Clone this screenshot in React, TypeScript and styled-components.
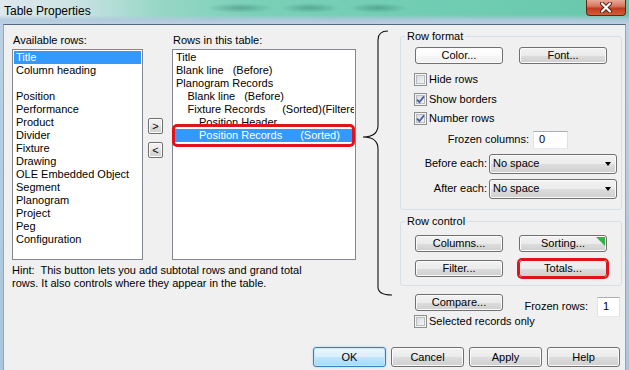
import React from 'react'
import styled, { createGlobalStyle, css } from 'styled-components'

const GlobalStyle = createGlobalStyle`
  html, body {
    margin: 0;
    padding: 0;
    background: #fff;
  }
  body {
    font-family: 'Liberation Sans', Arial, sans-serif;
    font-size: 11px;
    line-height: 13px;
    color: #000;
  }
  * {
    box-sizing: border-box;
  }
`

const Window = styled.div`
  width: 629px;
  height: 370px;
  display: flex;
  flex-direction: column;
  overflow: hidden;
  background: linear-gradient(to bottom, #bcd1e3, #a9c6dc);
`

const TitleBar = styled.div`
  height: 24px;
  flex: none;
  display: flex;
  align-items: flex-start;
  justify-content: space-between;
  padding: 0 3px 0 4px;
  background:
    linear-gradient(to bottom, rgba(190, 208, 226, 0) 62%, rgba(178, 201, 222, 0.9) 82%, #bcd0e2 100%),
    radial-gradient(ellipse 34px 5px at 240px 8px, rgba(25, 95, 80, 0.35), transparent),
    radial-gradient(ellipse 30px 5px at 310px 8px, rgba(25, 95, 80, 0.35), transparent),
    radial-gradient(ellipse 30px 5px at 378px 8px, rgba(25, 95, 80, 0.35), transparent),
    radial-gradient(ellipse 20px 4px at 210px 21px, rgba(60, 80, 100, 0.25), transparent),
    radial-gradient(ellipse 20px 4px at 330px 21px, rgba(60, 80, 100, 0.2), transparent),
    linear-gradient(to right, #dfe8ef 0px, #cde3e4 70px, #96d7c5 160px, #79d0b7 260px, #6fccb1 480px, #68c7ab 629px);
`

const Title = styled.div`
  padding-top: 4px;
  font-size: 12px;
  line-height: 15px;
`

const CloseButton = styled.div`
  width: 40px;
  height: 16px;
  display: flex;
  align-items: center;
  justify-content: center;
  border: 1px solid #6a2114;
  border-top: none;
  border-radius: 0 0 4px 4px;
  background: linear-gradient(to bottom, #eaa898 0%, #d8765e 42%, #c13a1d 55%, #d2603a 100%);
`

const Client = styled.div`
  flex: 1;
  display: flex;
  flex-direction: column;
  margin: 0 3px;
  background: #f0f0f0;
  border-top: 1px solid #56697c;
  border-left: 1px solid #8ea8bf;
  border-right: 1px solid #8ea8bf;
`

const Main = styled.div`
  display: flex;
  align-items: flex-start;
  padding: 3px 3px 0 8px;
`

const LeftArea = styled.div`
  width: 344px;
  flex: none;
  padding-top: 5.5px;
  display: grid;
  grid-template-columns: 131px 29px 184px;
`

const FieldLabel = styled.div`
  margin: 0 0 2.5px 1px;
  white-space: nowrap;
`

const ListBox = styled.div`
  height: 211px;
  border: 1px solid #828790;
  background: #fff;
  padding: 1px;
`

const ListItem = styled.div<{ $selected?: boolean; $level?: number }>`
  height: 13px;
  line-height: 13px;
  padding-left: ${p => 2 + (p.$level ?? 0) * 11.5}px;
  white-space: nowrap;
  overflow: hidden;
  ${p =>
    p.$selected &&
    css`
      background: #3399ff;
      color: #fff;
    `}
`

const Note = styled.span<{ $gap: number }>`
  margin-left: ${p => p.$gap}px;
`

const Marked = styled.div`
  position: relative;

  &::before {
    content: '';
    position: absolute;
    top: -5px;
    bottom: -5px;
    left: -2px;
    right: -1px;
    border: 3px solid #e0121c;
    border-radius: 5px;
  }
`

const MoveButtons = styled.div`
  display: flex;
  flex-direction: column;
  gap: 8px;
  padding: 69px 0 0 5px;
`

const MoveButton = styled.button`
  width: 15px;
  height: 16px;
  padding: 0;
  font-family: inherit;
  font-size: 11px;
  line-height: 12px;
  color: #000;
  border: 1px solid #707070;
  border-radius: 2px;
  background: linear-gradient(to bottom, #f2f2f2 0%, #ebebeb 50%, #dddddd 51%, #cfcfcf 100%);
  box-shadow: inset 0 0 0 1px #fafafa;
`

const Hint = styled.div`
  grid-column: 1 / -1;
  margin-top: 3.5px;
`

const Brace = styled.svg`
  flex: none;
  width: 36px;
  height: 270px;
  margin-left: 4px;
`

const RightPanel = styled.div`
  width: 222px;
  flex: none;
  margin: 1.5px 0 0 4px;
  display: flex;
  flex-direction: column;
`

const Group = styled.fieldset<{ $gapTop?: number }>`
  margin: ${p => p.$gapTop ?? 0}px 0 0;
  padding: 0;
  min-width: 0;
  border: 1px solid #d5dfe5;
  border-radius: 3px;
`

const Legend = styled.legend`
  margin-left: 4px;
  padding: 0 2px;
  line-height: 13px;
`

const GroupBody = styled.div<{ $pad: string }>`
  padding: ${p => p.$pad};
  display: flex;
  flex-direction: column;
`

const ButtonRow = styled.div<{ $top?: number }>`
  display: flex;
  gap: 16px;
  margin: ${p => p.$top ?? 0}px 0 0 1px;
`

const Button = styled.button<{
  $size?: 'small' | 'large'
  $tone?: 'plain' | 'light' | 'primary'
  $marked?: boolean
  $flagged?: boolean
}>`
  position: relative;
  flex: none;
  width: ${p => (p.$size === 'large' ? 73 : 88)}px;
  height: ${p => (p.$size === 'large' ? 20 : 17)}px;
  padding: 0;
  font-family: inherit;
  font-size: 11px;
  line-height: 13px;
  color: #000;
  border: 1px solid #707070;
  border-radius: 3px;
  background: linear-gradient(to bottom, #f2f2f2 0%, #ebebeb 50%, #dddddd 51%, #cfcfcf 100%);
  box-shadow: inset 0 0 0 1px #fbfbfb;

  ${p =>
    p.$tone === 'light' &&
    css`
      background: linear-gradient(to bottom, #ffffff 0%, #fbfbfb 50%, #f5f5f5 51%, #f1f1f1 100%);
    `}

  ${p =>
    p.$tone === 'primary' &&
    css`
      border-color: #3c7fb1;
      background: linear-gradient(to bottom, #eaf6fd 0%, #d9f0fc 50%, #bee6fd 51%, #a7d9f5 100%);
      box-shadow: inset 0 0 0 1px #c5e6f8, 0 0 2px rgba(90, 170, 220, 0.6);
    `}

  ${p =>
    p.$marked &&
    css`
      border-color: #e0121c;
      box-shadow: 0 0 0 2px #e0121c;
    `}

  ${p =>
    p.$flagged &&
    css`
      &::after {
        content: '';
        position: absolute;
        top: 1px;
        right: 1px;
        border-left: 9px solid transparent;
        border-top: 9px solid #33b24a;
      }
    `}
`

const Checks = styled.div<{ $top: number; $indent?: number }>`
  display: flex;
  flex-direction: column;
  gap: 6.5px;
  margin-top: ${p => p.$top}px;
  padding-left: ${p => p.$indent ?? 0}px;
`

const CheckRow = styled.div`
  display: flex;
  align-items: center;
  gap: 2px;
  height: 13px;
  white-space: nowrap;
`

const CheckBox = styled.span`
  width: 13px;
  height: 13px;
  flex: none;
  display: flex;
  align-items: center;
  justify-content: center;
  border: 1px solid #8e8f8f;
  background: linear-gradient(135deg, #d2d5d9 0%, #e9eaec 55%, #fbfbfb 100%);
  box-shadow: inset 0 0 0 1px #f4f4f4, inset 0 0 0 2px #b9bdc2;
`

const FieldRow = styled.div<{ $top: number; $right: number; $gap: number }>`
  display: flex;
  align-items: center;
  justify-content: flex-end;
  gap: ${p => p.$gap}px;
  margin-top: ${p => p.$top}px;
  padding-right: ${p => p.$right}px;
  white-space: nowrap;
`

const TextBox = styled.div<{ $w: number; $h: number }>`
  width: ${p => p.$w}px;
  height: ${p => p.$h}px;
  flex: none;
  display: flex;
  align-items: center;
  padding-left: 5px;
  background: #fff;
  border: 1px solid;
  border-color: #abadb3 #dbdfe6 #e3e9ef #e2e3ea;
`

const Select = styled.div`
  width: 128px;
  height: 20px;
  flex: none;
  display: flex;
  align-items: center;
  padding: 0 5px 0 3px;
  border: 1px solid #707070;
  border-radius: 3px;
  background: linear-gradient(to bottom, #f2f2f2 0%, #ebebeb 50%, #dddddd 51%, #cfcfcf 100%);
  box-shadow: inset 0 0 0 1px #fbfbfb;
`

const Arrow = styled.span`
  margin-left: auto;
  width: 0;
  height: 0;
  border-left: 3.5px solid transparent;
  border-right: 3.5px solid transparent;
  border-top: 4px solid #000;
`

const CompareRow = styled.div`
  display: flex;
  align-items: flex-start;
  height: 17px;
  margin-top: 8px;
  padding-left: 15px;
  white-space: nowrap;
`

const FrozenRows = styled.div`
  margin-left: auto;
  margin-right: 2px;
  display: flex;
  align-items: center;
  gap: 9px;
  padding-top: 3px;
`

const Footer = styled.div`
  margin-top: auto;
  display: flex;
  justify-content: flex-end;
  gap: 5px;
  padding: 0 5px 3px 0;
`

const Check = ({ checked, label }: { checked?: boolean; label: string }) => (
  <CheckRow>
    <CheckBox>
      {checked && (
        <svg width="9" height="9" viewBox="0 0 9 9">
          <path d="M1 4.6 L3.4 7.2 L8 1.4" fill="none" stroke="#4a5d9b" strokeWidth="1.8" />
        </svg>
      )}
    </CheckBox>
    {label}
  </CheckRow>
)

const availableRows = [
  'Title',
  'Column heading',
  '',
  'Position',
  'Performance',
  'Product',
  'Divider',
  'Fixture',
  'Drawing',
  'OLE Embedded Object',
  'Segment',
  'Planogram',
  'Project',
  'Peg',
  'Configuration',
]

type TableRow = { level: number; name: string; note?: string; gap?: number; selected?: boolean }

const tableRows: TableRow[] = [
  { level: 0, name: 'Title' },
  { level: 0, name: 'Blank line', note: '(Before)', gap: 9 },
  { level: 0, name: 'Planogram Records' },
  { level: 1, name: 'Blank line', note: '(Before)', gap: 9 },
  { level: 1, name: 'Fixture Records', note: '(Sorted)(Filtered)', gap: 17 },
  { level: 2, name: 'Position Header' },
  { level: 2, name: 'Position Records', note: '(Sorted)', gap: 18, selected: true },
]

const App = () => {
  return (
    <>
      <GlobalStyle />
      <Window>
        <TitleBar>
          <Title>Table Properties</Title>
          <CloseButton>
            <svg width="14" height="11" viewBox="0 0 14 11">
              <path d="M3 1.5 L11 9.5 M11 1.5 L3 9.5" stroke="#5a1a10" strokeWidth="4" strokeLinecap="round" />
              <path d="M3 1.5 L11 9.5 M11 1.5 L3 9.5" stroke="#fff" strokeWidth="2.2" strokeLinecap="round" />
            </svg>
          </CloseButton>
        </TitleBar>
        <Client>
          <Main>
            <LeftArea>
              <FieldLabel>Available rows:</FieldLabel>
              <div />
              <FieldLabel>Rows in this table:</FieldLabel>
              <ListBox>
                {availableRows.map((row, i) => (
                  <ListItem key={i} $selected={i === 0}>
                    {row}
                  </ListItem>
                ))}
              </ListBox>
              <MoveButtons>
                <MoveButton>&gt;</MoveButton>
                <MoveButton>&lt;</MoveButton>
              </MoveButtons>
              <ListBox>
                {tableRows.map((row, i) => {
                  const item = (
                    <ListItem key={i} $level={row.level} $selected={row.selected}>
                      {row.name}
                      {row.note && <Note $gap={row.gap ?? 9}>{row.note}</Note>}
                    </ListItem>
                  )
                  return row.selected ? <Marked key={i}>{item}</Marked> : item
                })}
              </ListBox>
              <Hint>
                Hint:&nbsp; This button lets you add subtotal rows and grand total
                <br />
                rows. It also controls where they appear in the table.
              </Hint>
            </LeftArea>

            <Brace viewBox="0 0 36 270">
              <path
                d="M28 3 C21.5 3 18 6 18 12 L18 97 C18 104 14 109 3 109 C14 109 18 114 18 121 L18 259 C18 264 22 267 32 267"
                fill="none"
                stroke="#111"
                strokeWidth="1.1"
              />
            </Brace>

            <RightPanel>
              <Group>
                <Legend>Row format</Legend>
                <GroupBody $pad="4.5px 0 10px 13px">
                  <ButtonRow>
                    <Button $tone="light">Color...</Button>
                    <Button>Font...</Button>
                  </ButtonRow>
                  <Checks $top={9}>
                    <Check label="Hide rows" />
                    <Check checked label="Show borders" />
                    <Check checked label="Number rows" />
                  </Checks>
                  <FieldRow $top={5.5} $right={53} $gap={4}>
                    Frozen columns:
                    <TextBox $w={35} $h={18}>0</TextBox>
                  </FieldRow>
                  <FieldRow $top={5} $right={4} $gap={2}>
                    Before each:
                    <Select>
                      No space
                      <Arrow />
                    </Select>
                  </FieldRow>
                  <FieldRow $top={5} $right={4} $gap={2}>
                    After each:
                    <Select>
                      No space
                      <Arrow />
                    </Select>
                  </FieldRow>
                </GroupBody>
              </Group>

              <Group $gapTop={5.5}>
                <Legend>Row control</Legend>
                <GroupBody $pad="7px 0 7.5px 13px">
                  <ButtonRow>
                    <Button>Columns...</Button>
                    <Button $flagged>Sorting...</Button>
                  </ButtonRow>
                  <ButtonRow $top={8}>
                    <Button>Filter...</Button>
                    <Button $marked>Totals...</Button>
                  </ButtonRow>
                </GroupBody>
              </Group>

              <CompareRow>
                <Button>Compare...</Button>
                <FrozenRows>
                  Frozen rows:
                  <TextBox $w={23} $h={20}>1</TextBox>
                </FrozenRows>
              </CompareRow>
              <Checks $top={4} $indent={14}>
                <Check label="Selected records only" />
              </Checks>
            </RightPanel>
          </Main>

          <Footer>
            <Button $size="large" $tone="primary">OK</Button>
            <Button $size="large">Cancel</Button>
            <Button $size="large">Apply</Button>
            <Button $size="large">Help</Button>
          </Footer>
        </Client>
      </Window>
    </>
  )
}

export default App
